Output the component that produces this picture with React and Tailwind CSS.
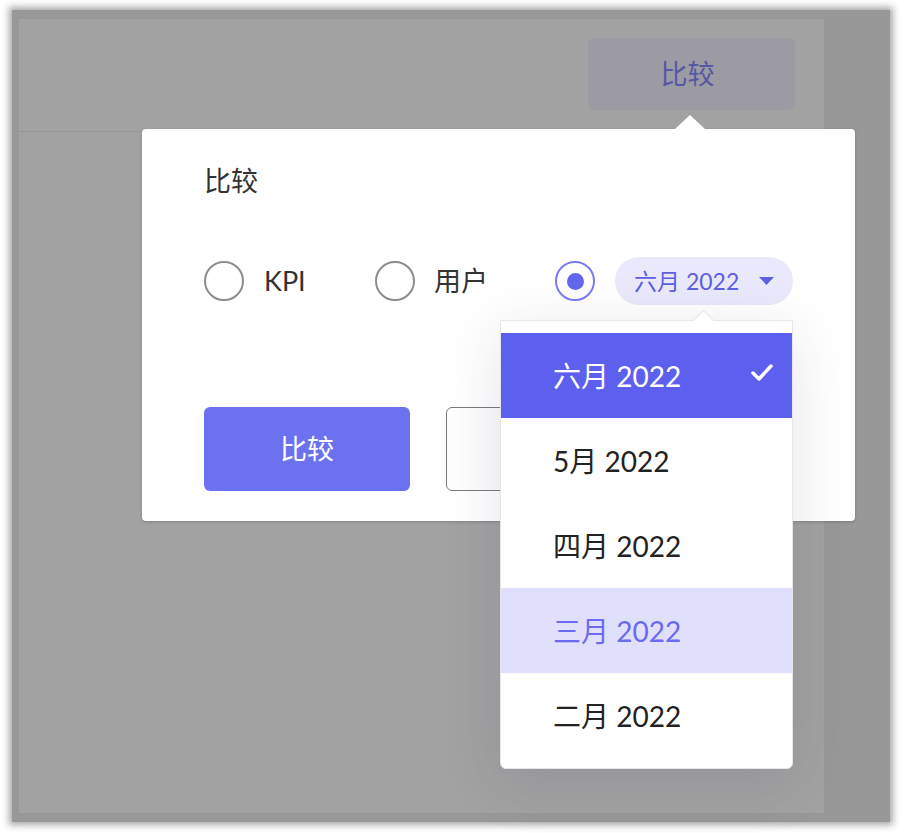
const font = { fontFamily: '"Lato", "Noto Sans CJK SC", sans-serif' }

function Radio({ checked }) {
  return (
    <span
      className={
        'flex h-[40px] w-[40px] shrink-0 items-center justify-center rounded-full border-2 ' +
        (checked ? 'border-[#7a7cf0]' : 'border-[#8c8c8c]')
      }
    >
      {checked && <span className="h-[17px] w-[17px] rounded-full bg-[#6566ef]" />}
    </span>
  )
}

const months = ['六月 2022', '5月 2022', '四月 2022', '三月 2022', '二月 2022']

export default function App() {
  return (
    <div className="relative h-[833px] w-[905px] overflow-hidden bg-white" style={font}>
      {/* dimmed page behind the dialog */}
      <div className="ml-[12px] mt-[10px] h-[812px] w-[878px] bg-[#989898] pl-[7px] pt-[9px] shadow-[0_0_7px_3px_rgba(0,0,0,0.35)]">
        <div className="h-[794px] w-[805px] bg-[#a2a2a2]">
          <div className="flex h-[113px] justify-end border-b border-[#979797] pr-[29px] pt-[19px]">
            <div className="flex h-[72px] w-[207px] items-center justify-center rounded-[6px] bg-[#9c9ba3] pr-[8px] text-[27px] text-[#5657a3]">
              比较
            </div>
          </div>
        </div>
      </div>

      {/* compare popover */}
      <div className="absolute left-[142px] top-[129px] h-[392px] w-[713px] rounded-[4px] bg-white shadow-[0_1px_3px_rgba(0,0,0,0.2)]">
        <div className="absolute -top-[14px] left-[533px] h-0 w-0 border-x-[15px] border-b-[14px] border-x-transparent border-b-white" />
        <div className="pl-[62px] pt-[34px]">
          <div className="text-[27px] leading-[36px] text-[#333]">比较</div>
          <div className="mt-[57px] flex h-[50px] items-center text-[27px] text-[#333]">
            <Radio />
            <span className="ml-[20px] w-[111px]">KPI</span>
            <Radio />
            <span className="ml-[19px] w-[121px]">用户</span>
            <Radio checked />
            <div className="ml-[20px] flex h-[48px] w-[178px] items-center rounded-full bg-[#e9e9fb] pl-[19px] text-[23px] text-[#5e5fe2]">
              <span>六月 2022</span>
              <svg className="ml-[20px]" width="15" height="8" viewBox="0 0 15 8">
                <path d="M0 0 L15 0 L7.5 8 Z" fill="#5e5fe2" />
              </svg>
            </div>
          </div>
          <div className="mt-[101px] flex gap-[36px]">
            <button className="flex h-[84px] w-[206px] items-center justify-center rounded-[6px] bg-[#6c71f0] text-[27px] text-white">
              比较
            </button>
            {/* cancel button, label hidden under the open dropdown */}
            <button className="h-[84px] w-[206px] rounded-[6px] border border-[#7a7a7a] bg-gradient-to-r from-white to-[#f4f4f6]" />
          </div>
        </div>
      </div>

      {/* month dropdown */}
      <div className="absolute left-[500px] top-[320px] w-[293px] rounded-b-[6px] border border-[#e6e6e6] bg-white pb-[10px] pt-[12px] shadow-[0_12px_60px_rgba(40,40,80,0.12)]">
        <div className="absolute -top-[8px] left-[195px] h-[15px] w-[15px] rotate-45 border-l border-t border-[#e6e6e6] bg-white" />
        {months.map((m, i) => (
          <div
            key={m}
            className={
              'relative flex h-[85px] items-center pl-[52px] text-[28px] ' +
              (i === 0
                ? 'bg-[#5d5fef] text-white'
                : i === 3
                  ? 'bg-[#e0e0fc] text-[#6a6bef]'
                  : 'text-[#222]')
            }
          >
            {m}
            {i === 0 && (
              <svg className="absolute right-[19px] top-[31px]" width="22" height="17" viewBox="0 0 22 17">
                <path d="M2 9 L8 15 L20 2" fill="none" stroke="white" strokeWidth="3.5" strokeLinecap="round" strokeLinejoin="round" />
              </svg>
            )}
          </div>
        ))}
      </div>
    </div>
  )
}
